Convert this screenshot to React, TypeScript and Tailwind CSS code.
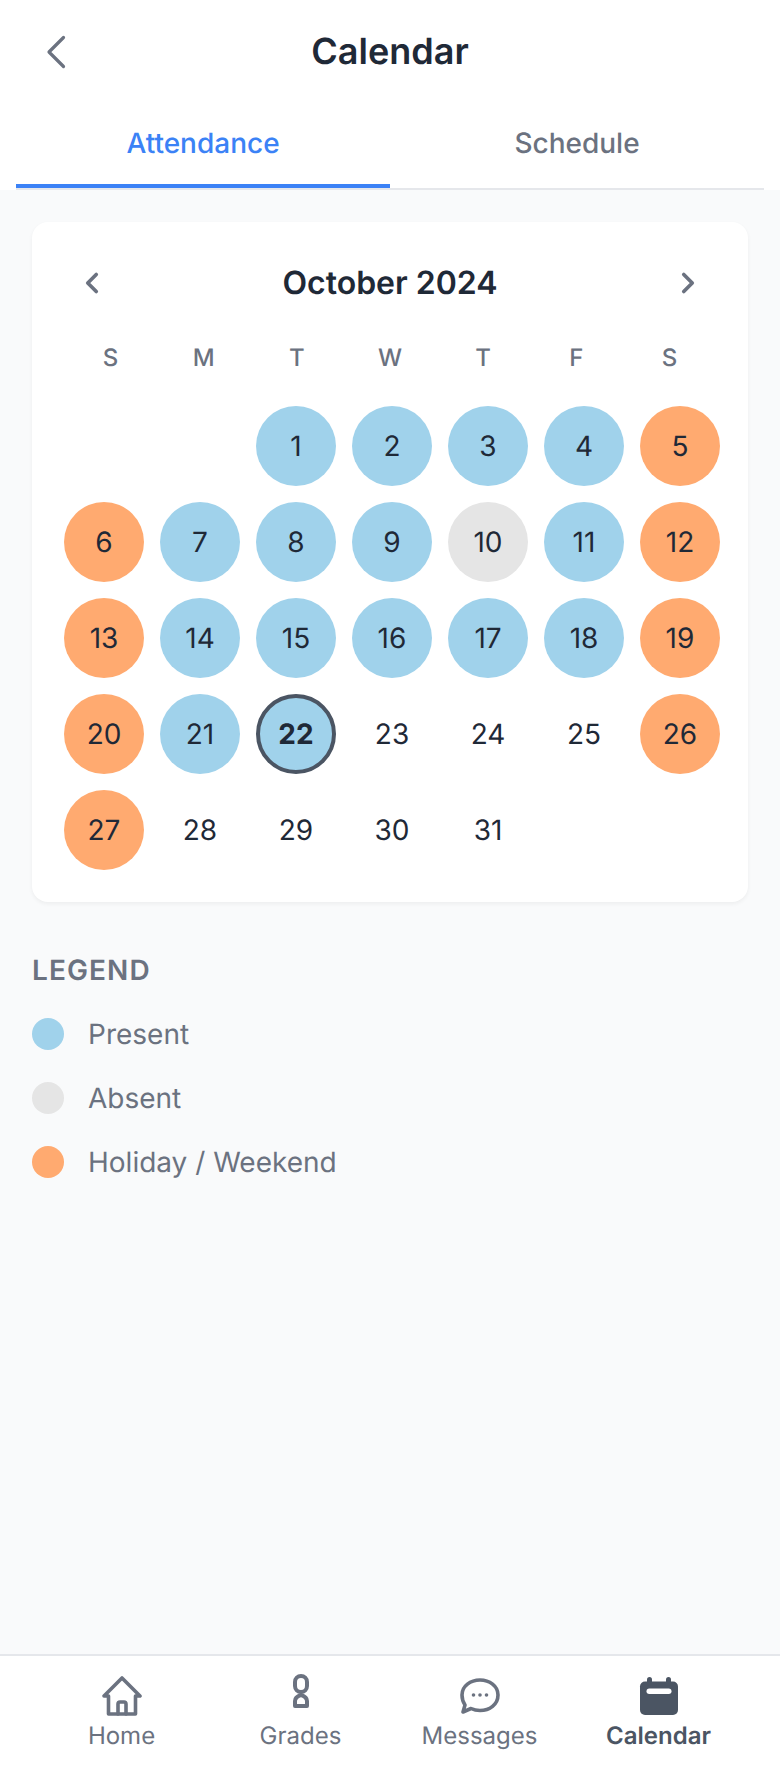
import { ChevronLeft, ChevronRight } from "lucide-react";

type Status = "present" | "absent" | "holiday" | "none";

const weekdays = ["S", "M", "T", "W", "T", "F", "S"];

const statusClass: Record<Status, string> = {
  present: "bg-[#a0d2eb]",
  absent: "bg-[#e5e5e5]",
  holiday: "bg-[#ffaa70]",
  none: "",
};

const holidays = [5, 6, 12, 13, 19, 20, 26, 27];

function statusOf(day: number): Status {
  if (holidays.includes(day)) return "holiday";
  if (day === 10) return "absent";
  if (day <= 22) return "present";
  return "none";
}

const days = Array.from({ length: 31 }, (_, i) => i + 1);

const legend = [
  { label: "Present", color: "bg-[#a0d2eb]" },
  { label: "Absent", color: "bg-[#e5e5e5]" },
  { label: "Holiday / Weekend", color: "bg-[#ffaa70]" },
];

function HomeIcon() {
  return (
    <svg width="40" height="40" viewBox="0 0 40 40" fill="none" stroke="#6b7280" strokeWidth="3.6" strokeLinejoin="round" strokeLinecap="round">
      <path d="M2 20 L20 2 L38 20 L33.500 20 L33.500 38 L6.500 38 L6.500 20 Z" />
      <path d="M16 38 V28 Q16 26 18 26 H22 Q24 26 24 28 V38" />
    </svg>
  );
}

function GradesIcon() {
  return (
    <svg width="40" height="40" viewBox="0 0 40 40" fill="none" stroke="#6b7280" strokeWidth="4" className="-mt-[3px] mb-[3px]">
      <rect x="14" y="3" width="12" height="16" rx="6" />
      <path d="M14 33 V28 Q14 24 20 22 Q26 24 26 28 V33 Z" strokeLinejoin="round" />
    </svg>
  );
}

function MessagesIcon() {
  return (
    <svg width="40" height="40" viewBox="0 0 40 40" fill="none">
      <path
        d="M20 4 C29.500 4 38 10 38 19 C38 28.500 29.500 34.500 20 34.500 C16.500 34.500 13.500 33.700 11 32.500 L3 36 L5 29 C3 26 2 22.500 2 19 C2 10 10.500 4 20 4 Z"
        stroke="#6b7280"
        strokeWidth="3.6"
        strokeLinejoin="round"
      />
      <circle cx="13.500" cy="19" r="1.800" fill="#6b7280" />
      <circle cx="20" cy="19" r="1.800" fill="#6b7280" />
      <circle cx="26.500" cy="19" r="1.800" fill="#6b7280" />
    </svg>
  );
}

function CalendarIcon() {
  return (
    <svg width="40" height="40" viewBox="0 0 40 40" fill="none">
      <rect x="1" y="5.500" width="38" height="33.500" rx="5" fill="#4b5563" />
      <rect x="8" y="1" width="5" height="9" rx="2.500" fill="#4b5563" />
      <rect x="27" y="1" width="5" height="9" rx="2.500" fill="#4b5563" />
      <rect x="7.500" y="12.500" width="25" height="5.500" rx="2.750" fill="#fff" />
    </svg>
  );
}

function BackIcon() {
  return (
    <svg width="20" height="36" viewBox="0 0 20 36" fill="none" stroke="#6b7280" strokeWidth="3.2" strokeLinecap="round" strokeLinejoin="round" className="absolute left-[30px] top-[34px]">
      <path d="M17.500 3.500 L3 18 L17.500 32.500" />
    </svg>
  );
}

const navItems = [
  { label: "Home", icon: <HomeIcon /> },
  { label: "Grades", icon: <GradesIcon /> },
  { label: "Messages", icon: <MessagesIcon /> },
  { label: "Calendar", icon: <CalendarIcon />, active: true },
];

export default function App() {
  return (
    <div className="flex h-[1768px] flex-col bg-[#f9fafb] font-['Inter',sans-serif] antialiased [font-optical-sizing:none] [text-rendering:geometricPrecision]">
      <header className="bg-white px-4">
        <div className="relative flex h-[102px] items-center justify-center">
          <BackIcon />
          <h1 className="text-[36px] leading-[40px] font-semibold text-[#1f2937]">Calendar</h1>
        </div>
        <div className="flex h-[88px] border-b-2 border-[#e5e7eb]">
          <div className="flex h-[86px] flex-1 items-center justify-center border-b-4 border-[#3b82f6] text-[28px] font-medium text-[#3b82f6]">
            Attendance
          </div>
          <div className="flex h-[82px] flex-1 items-center justify-center text-[28px] font-medium text-[#6b7280]">
            Schedule
          </div>
        </div>
      </header>

      <main className="flex-1 px-8 pt-8">
        <section className="rounded-[16px] bg-white p-8 shadow-[0_2px_4px_rgba(0,0,0,0.05)]">
          <div className="flex h-[58px] items-center justify-between px-[11px]">
            <ChevronLeft size={34} strokeWidth={2.6} className="text-[#6b7280]" />
            <h2 className="text-[32px] font-semibold text-[#1f2937]">October 2024</h2>
            <ChevronRight size={34} strokeWidth={2.6} className="text-[#6b7280]" />
          </div>
          <div className="mt-[30px] grid grid-cols-7">
            {weekdays.map((d, i) => (
              <div key={i} className="text-center text-[24px] leading-[32px] font-medium text-[#6b7280]">
                {d}
              </div>
            ))}
          </div>
          <div className="mt-[32px] grid grid-cols-[repeat(7,80px)] gap-4">
            <div className="col-span-2" />
            {days.map((day) => (
              <div
                key={day}
                className={`flex h-20 w-20 items-center justify-center rounded-full text-[28px] text-[#1f2937] ${statusClass[statusOf(day)]} ${
                  day === 22 ? "border-[4px] border-[#4b5563] font-bold" : ""
                }`}
              >
                {day}
              </div>
            ))}
          </div>
        </section>

        <section className="mt-[48px]">
          <h3 className="text-[28px] leading-[40px] font-semibold tracking-[1.1px] text-[#6b7280]">LEGEND</h3>
          <ul className="mt-[24px] flex flex-col gap-[24px]">
            {legend.map((item) => (
              <li key={item.label} className="flex h-[40px] items-center gap-6">
                <span className={`h-8 w-8 rounded-full ${item.color}`} />
                <span className="text-[28px] text-[#6b7280]">{item.label}</span>
              </li>
            ))}
          </ul>
        </section>
      </main>

      <nav className="flex h-[114px] border-t-2 border-[#e5e7eb] bg-white px-8 pt-[20px]">
        {navItems.map((item) => (
          <div key={item.label} className="flex flex-1 flex-col items-center">
            {item.icon}
            <span className={`mt-1 text-[24px] leading-[32px] ${item.active ? "font-semibold text-[#4b5563]" : "text-[#6b7280]"}`}>
              {item.label}
            </span>
          </div>
        ))}
      </nav>
    </div>
  );
}
